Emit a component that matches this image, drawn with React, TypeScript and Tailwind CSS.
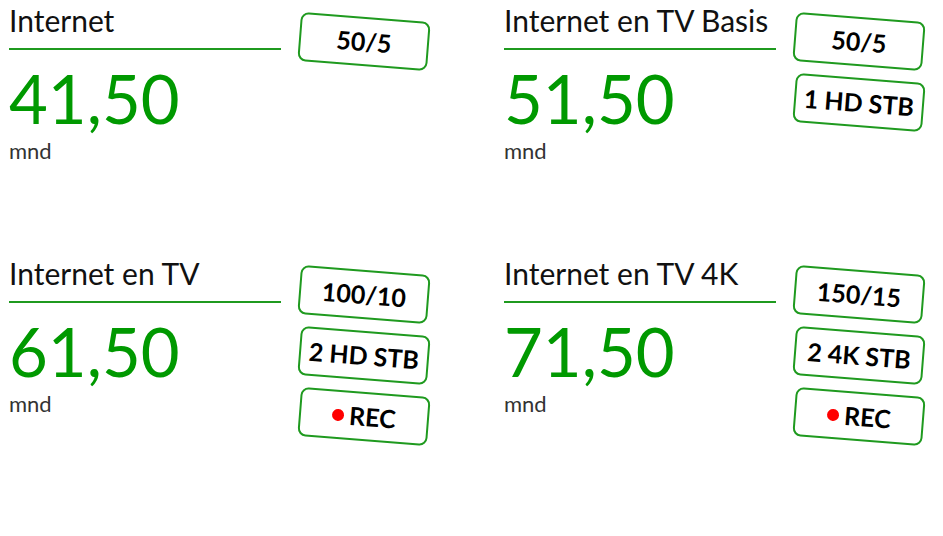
import React from 'react';

type Plan = {
    title: string;
    price: string;
    badges: string[];
};

const plans: Plan[] = [
    { title: 'Internet', price: '41,50', badges: ['50/5'] },
    { title: 'Internet en TV Basis', price: '51,50', badges: ['50/5', '1 HD STB'] },
    { title: 'Internet en TV', price: '61,50', badges: ['100/10', '2 HD STB', 'REC'] },
    { title: 'Internet en TV 4K', price: '71,50', badges: ['150/15', '2 4K STB', 'REC'] },
];

const Badge: React.FC<{ label: string }> = ({ label }) => (
    <div className="w-[130px] h-[49px] border-2 border-[#1f9a1f] rounded-[8px] bg-white flex items-center justify-center rotate-[4.5deg] text-[25px] font-bold text-black leading-none">
        {label === 'REC' && <span className="w-[12px] h-[12px] rounded-full bg-[#ff0000] mr-[5px]" />}
        <span>{label}</span>
    </div>
);

const PlanCard: React.FC<{ plan: Plan }> = ({ plan }) => (
    <div className="flex h-[253px]">
        <div className="w-[272px] pt-[2px]">
            <div className="text-[30px] leading-[36px] text-[#111] whitespace-nowrap">{plan.title}</div>
            <div className="h-[2px] bg-[#1f9a1f] mt-[10px]" />
            <div className="mt-[15px] text-[67px] leading-none text-[#009900]">{plan.price}</div>
            <div className="text-[22px] leading-[26px] text-[#333] mt-[6px]">mnd</div>
        </div>
        <div className="ml-[18px] pt-[17px] flex flex-col gap-[12px]">
            {plan.badges.map((b, i) => (
                <Badge key={i} label={b} />
            ))}
        </div>
    </div>
);

export default function App() {
    return (
        <div className="w-[943px] h-[536px] bg-white pl-[9px] overflow-hidden" style={{ fontFamily: 'Lato, "Open Sans", sans-serif' }}>
            <div className="grid grid-cols-[495px_1fr]">
                {plans.map((p, i) => (
                    <PlanCard key={i} plan={p} />
                ))}
            </div>
        </div>
    );
}
